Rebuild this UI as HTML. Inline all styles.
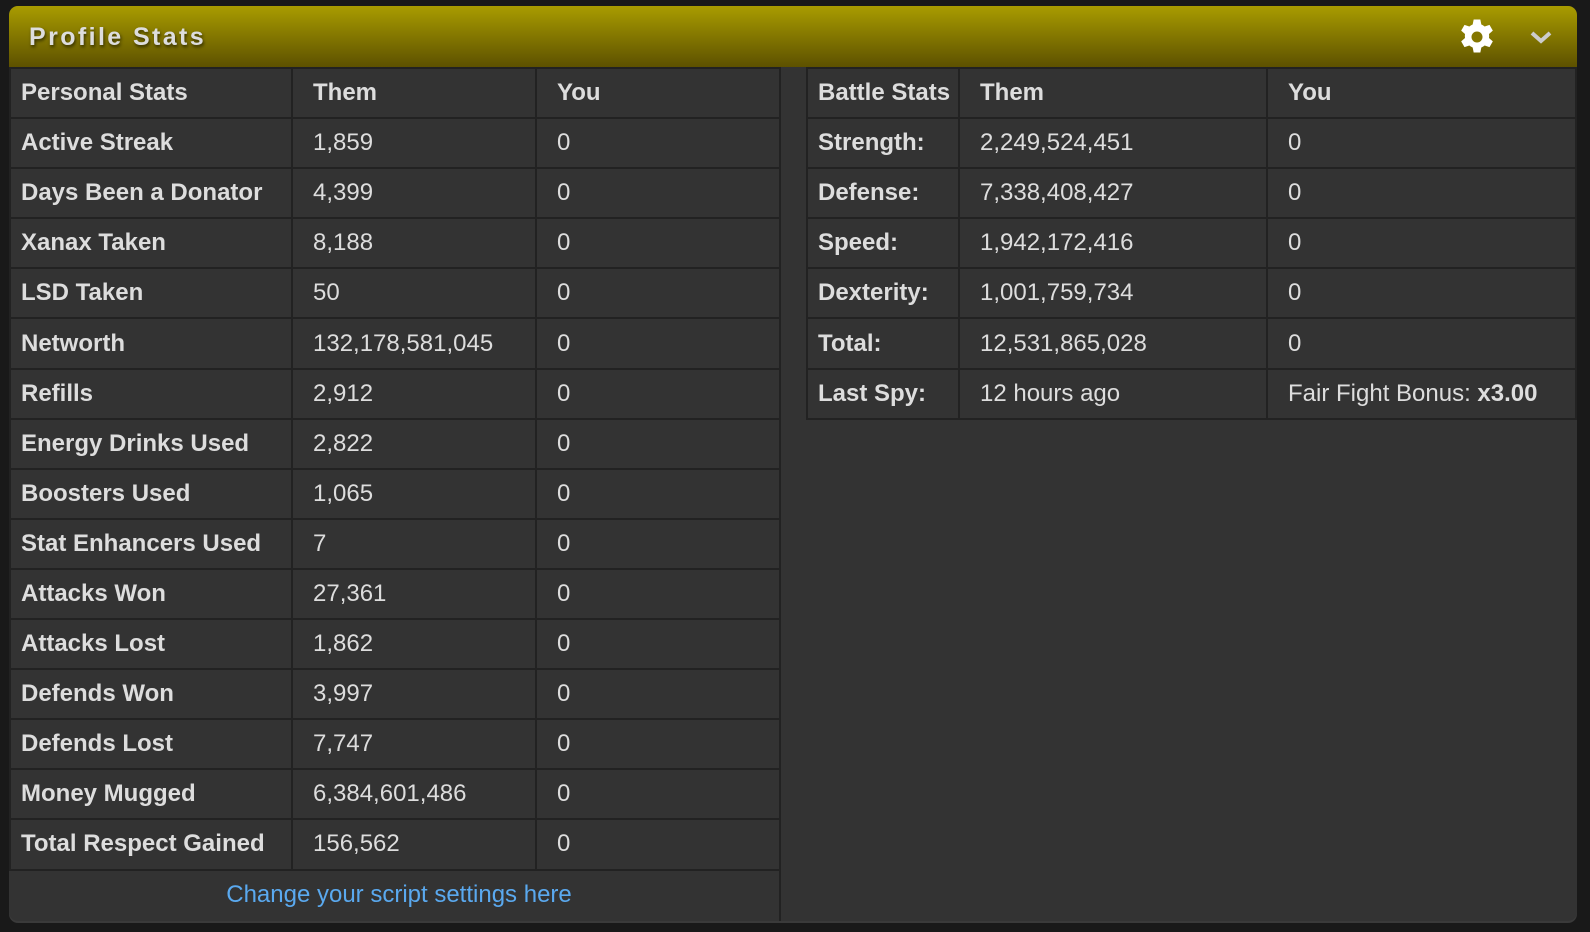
<!DOCTYPE html>
<html><head><meta charset="utf-8"><style>
html,body{margin:0;padding:0;background:#191919;width:1590px;height:932px;overflow:hidden;font-family:"Liberation Sans",Arial,sans-serif;}
.panel{position:absolute;left:9px;top:6px;width:1568px;height:915px;background:#333;border-radius:9px;box-shadow:0 2px 0 #3a3a3a;overflow:hidden;}
.hdr{position:absolute;left:0;top:0;width:1568px;height:61px;background:linear-gradient(#a99c00,#5d5100);}
.hdr .t{position:absolute;left:20px;top:17px;font-size:25px;font-weight:bold;color:#ddd;letter-spacing:2.4px;text-shadow:1px 2px 3px rgba(0,0,0,.6);}
table{position:absolute;border-collapse:collapse;table-layout:fixed;color:#ddd;font-size:24px;}
td{border:2px solid #222;height:48.1px;padding:0 0 0 20px;white-space:nowrap;}
td:first-child{padding-left:10px;font-weight:bold;}
tr.h td{font-weight:bold;}
.l{left:0;top:61px;}
.r{left:797px;top:61px;}
.foot{position:absolute;left:0;top:864px;width:780px;height:50px;text-align:center;line-height:50px;color:#5aa9ef;font-size:24px;}
.vl{position:absolute;left:770px;top:862px;width:2px;height:55px;background:#222;}
</style></head><body>
<div class="panel">
<div class="hdr"><div class="t">Profile Stats</div>
<svg style="position:absolute;left:1448px;top:11px" width="40" height="40" viewBox="0 0 24 24"><path fill="#fff" d="M10 1.5h4l.6 3a8 8 0 0 1 2 1.2l2.9-1 2 3.5-2.3 2a8 8 0 0 1 0 2.4l2.3 2-2 3.5-2.9-1a8 8 0 0 1-2 1.2l-.6 3h-4l-.6-3a8 8 0 0 1-2-1.2l-2.9 1-2-3.5 2.3-2a8 8 0 0 1 0-2.4l-2.3-2 2-3.5 2.9 1a8 8 0 0 1 2-1.2z"/><circle cx="12" cy="12" r="3.3" fill="#847600"/></svg>
<svg style="position:absolute;left:1521px;top:23px" width="22" height="16" viewBox="0 0 22 16"><path d="M2 4l9 8 9-8" stroke="#ccc" stroke-width="4" fill="none"/></svg>
</div>
<table class="l"><colgroup><col style="width:282px"><col style="width:244px"><col style="width:244px"></colgroup>
<tr class="h"><td>Personal Stats</td><td>Them</td><td>You</td></tr>
<tr><td>Active Streak</td><td>1,859</td><td>0</td></tr>
<tr><td>Days Been a Donator</td><td>4,399</td><td>0</td></tr>
<tr><td>Xanax Taken</td><td>8,188</td><td>0</td></tr>
<tr><td>LSD Taken</td><td>50</td><td>0</td></tr>
<tr><td>Networth</td><td>132,178,581,045</td><td>0</td></tr>
<tr><td>Refills</td><td>2,912</td><td>0</td></tr>
<tr><td>Energy Drinks Used</td><td>2,822</td><td>0</td></tr>
<tr><td>Boosters Used</td><td>1,065</td><td>0</td></tr>
<tr><td>Stat Enhancers Used</td><td>7</td><td>0</td></tr>
<tr><td>Attacks Won</td><td>27,361</td><td>0</td></tr>
<tr><td>Attacks Lost</td><td>1,862</td><td>0</td></tr>
<tr><td>Defends Won</td><td>3,997</td><td>0</td></tr>
<tr><td>Defends Lost</td><td>7,747</td><td>0</td></tr>
<tr><td>Money Mugged</td><td>6,384,601,486</td><td>0</td></tr>
<tr><td>Total Respect Gained</td><td>156,562</td><td>0</td></tr>
</table>
<div class="foot">Change your script settings here</div>
<div class="vl"></div>
<table class="r"><colgroup><col style="width:152px"><col style="width:308px"><col style="width:309px"></colgroup>
<tr class="h"><td>Battle Stats</td><td>Them</td><td>You</td></tr>
<tr><td>Strength:</td><td>2,249,524,451</td><td>0</td></tr>
<tr><td>Defense:</td><td>7,338,408,427</td><td>0</td></tr>
<tr><td>Speed:</td><td>1,942,172,416</td><td>0</td></tr>
<tr><td>Dexterity:</td><td>1,001,759,734</td><td>0</td></tr>
<tr><td>Total:</td><td>12,531,865,028</td><td>0</td></tr>
<tr><td>Last Spy:</td><td>12 hours ago</td><td>Fair Fight Bonus: <b>x3.00</b></td></tr>
</table>
</div>
</body></html>
